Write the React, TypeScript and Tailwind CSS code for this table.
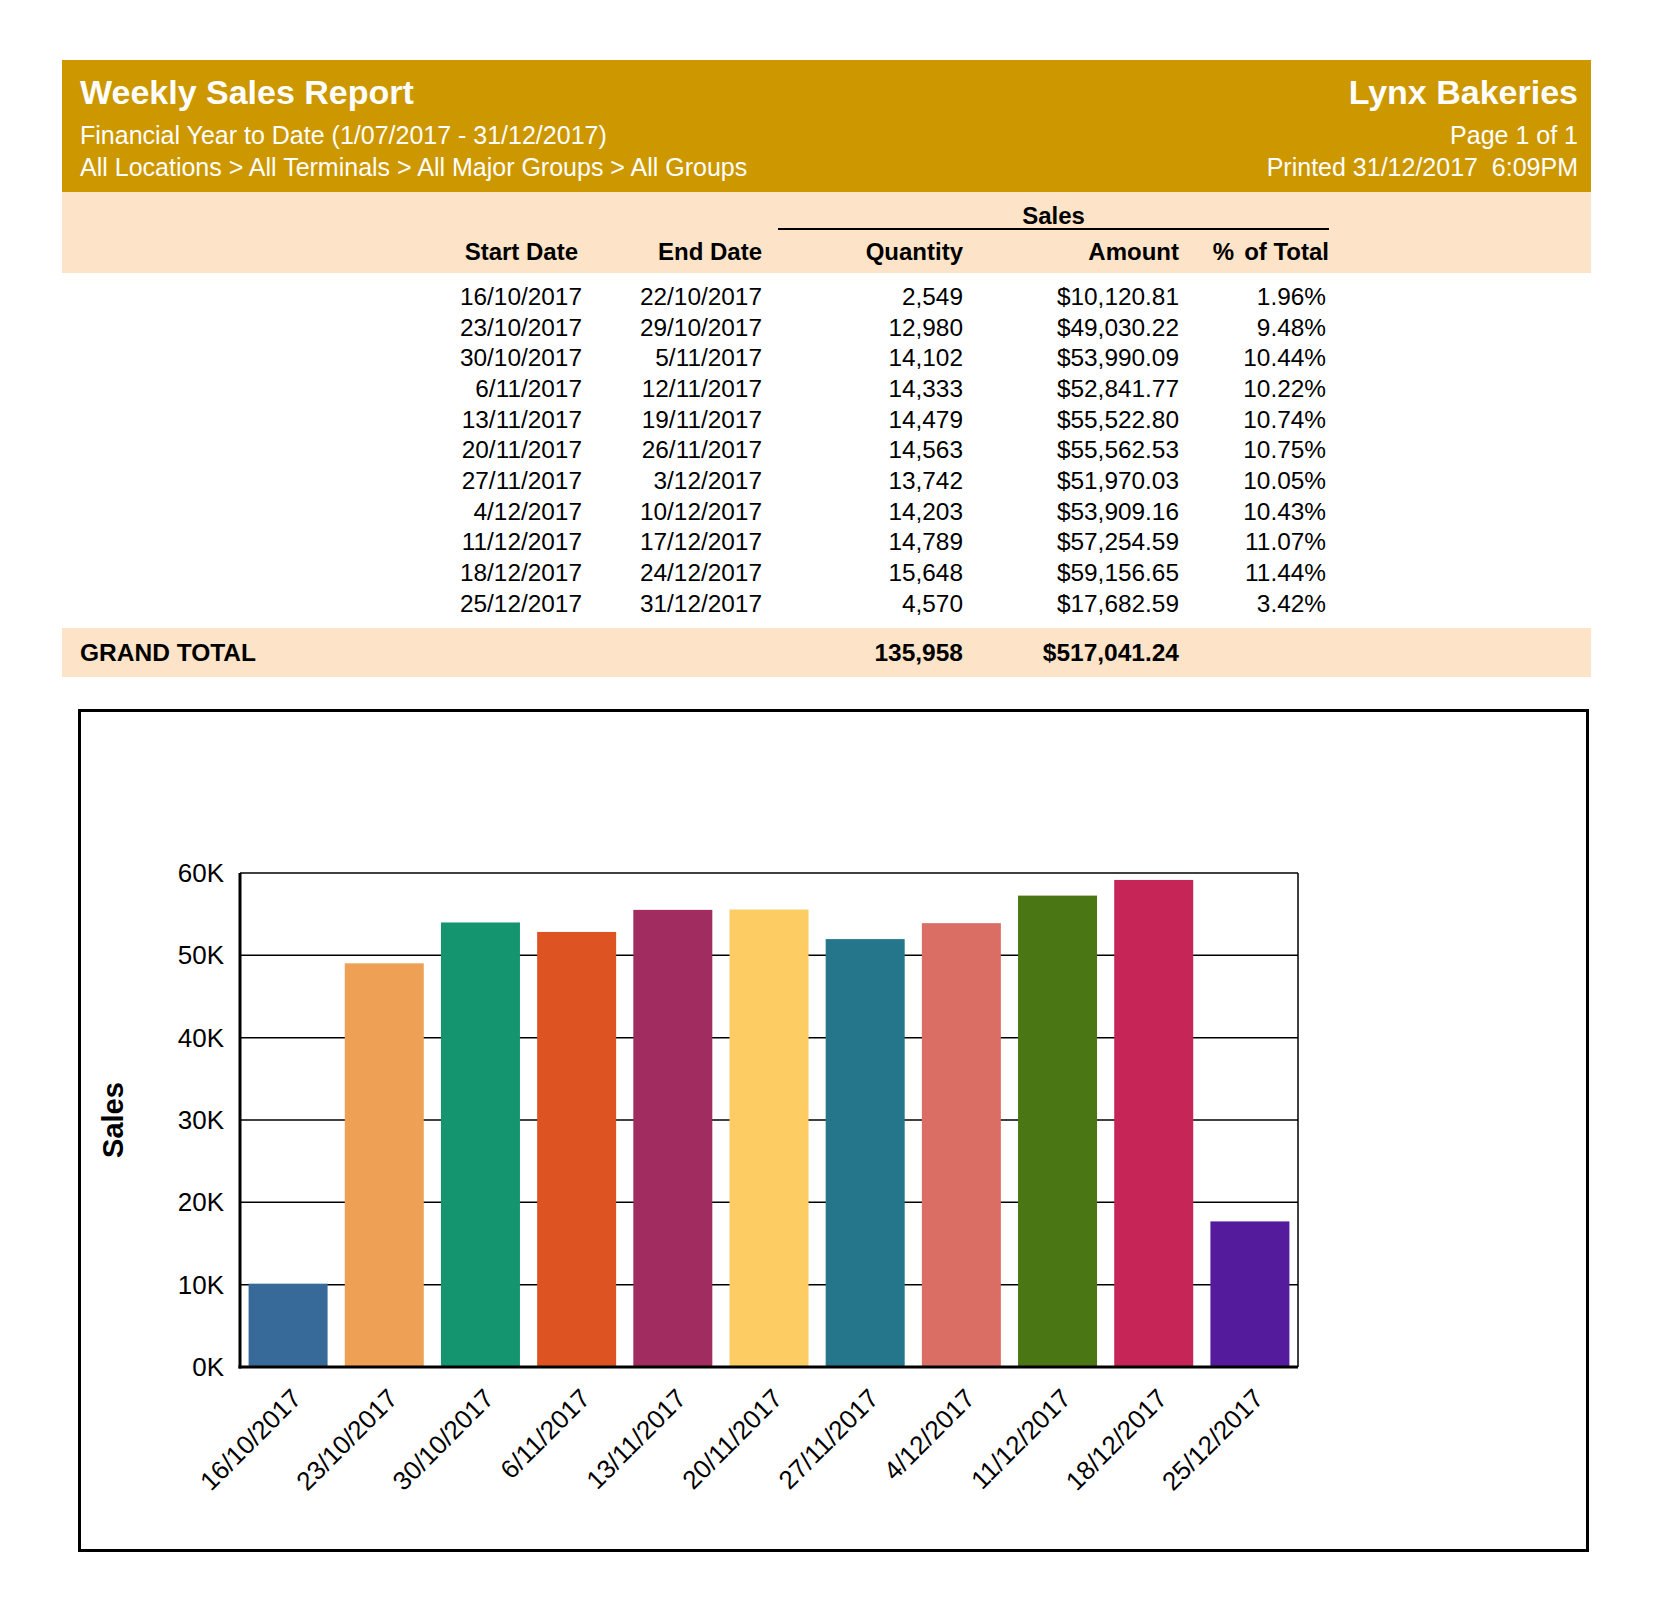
import React from 'react';

const rows = [
  { start: '16/10/2017', end: '22/10/2017', qty: '2,549', amount: '$10,120.81', pct: '1.96%', value: 10120.81, color: '#386a99' },
  { start: '23/10/2017', end: '29/10/2017', qty: '12,980', amount: '$49,030.22', pct: '9.48%', value: 49030.22, color: '#eea055' },
  { start: '30/10/2017', end: '5/11/2017', qty: '14,102', amount: '$53,990.09', pct: '10.44%', value: 53990.09, color: '#14956f' },
  { start: '6/11/2017', end: '12/11/2017', qty: '14,333', amount: '$52,841.77', pct: '10.22%', value: 52841.77, color: '#dd5422' },
  { start: '13/11/2017', end: '19/11/2017', qty: '14,479', amount: '$55,522.80', pct: '10.74%', value: 55522.8, color: '#a12c60' },
  { start: '20/11/2017', end: '26/11/2017', qty: '14,563', amount: '$55,562.53', pct: '10.75%', value: 55562.53, color: '#fdcc63' },
  { start: '27/11/2017', end: '3/12/2017', qty: '13,742', amount: '$51,970.03', pct: '10.05%', value: 51970.03, color: '#25768a' },
  { start: '4/12/2017', end: '10/12/2017', qty: '14,203', amount: '$53,909.16', pct: '10.43%', value: 53909.16, color: '#db6e64' },
  { start: '11/12/2017', end: '17/12/2017', qty: '14,789', amount: '$57,254.59', pct: '11.07%', value: 57254.59, color: '#4a7713' },
  { start: '18/12/2017', end: '24/12/2017', qty: '15,648', amount: '$59,156.65', pct: '11.44%', value: 59156.65, color: '#c62558' },
  { start: '25/12/2017', end: '31/12/2017', qty: '4,570', amount: '$17,682.59', pct: '3.42%', value: 17682.59, color: '#541b9c' },
];

// plot geometry, in page pixels
const plotLeft = 240;
const plotRight = 1298;
const plotTop = 873;
const plotBottom = 1367;
const pitch = (plotRight - plotLeft) / rows.length;
const barWidth = 79;
const yFor = (v: number) => plotBottom - (v / 60000) * (plotBottom - plotTop);

function SalesChart() {
  const ticks = [0, 10000, 20000, 30000, 40000, 50000, 60000];
  return (
    <svg width="1505" height="837" viewBox="81 712 1505 837" className="block">
      {ticks.map((t) => (
        <line key={t} x1={plotLeft} x2={plotRight} y1={yFor(t)} y2={yFor(t)} stroke="#000" strokeWidth="1.5" />
      ))}
      {rows.map((r, i) => {
        const cx = plotLeft + pitch * (i + 0.5);
        return <rect key={r.start} x={cx - barWidth / 2} y={yFor(r.value)} width={barWidth} height={plotBottom - yFor(r.value)} fill={r.color} />;
      })}
      <line x1={plotRight} x2={plotRight} y1={plotTop} y2={plotBottom} stroke="#000" strokeWidth="1.5" />
      <line x1={plotLeft} x2={plotLeft} y1={plotTop} y2={plotBottom + 1.5} stroke="#000" strokeWidth="3" />
      <line x1={plotLeft - 1.5} x2={plotRight} y1={plotBottom} y2={plotBottom} stroke="#000" strokeWidth="3" />
      {ticks.map((t) => (
        <text key={t} x={224} y={yFor(t) + 9} textAnchor="end" fontSize="26" fill="#000">
          {t / 1000}K
        </text>
      ))}
      <text x={122.5} y={1120} textAnchor="middle" fontSize="29" fontWeight="bold" fill="#000" transform="rotate(-90 122.5 1120)">
        Sales
      </text>
      {rows.map((r, i) => {
        const x = plotLeft + pitch * (i + 0.5) + 15;
        const y = 1400;
        return (
          <text key={r.start} x={x} y={y} textAnchor="end" fontSize="26" fill="#000" transform={`rotate(-45 ${x} ${y})`}>
            {r.start}
          </text>
        );
      })}
    </svg>
  );
}

export default function App() {
  return (
    <div className="w-[1653px] h-[1620px] bg-white pt-[60px] pl-[62px] font-['Liberation_Sans',Arial,sans-serif] text-black">
      <div className="w-[1529px]">
        <div className="h-[132px] bg-[#cd9700] text-white flex justify-between pl-[18px] pr-[13px] pt-[12px]">
          <div>
            <h1 className="text-[34px] leading-[40px] font-bold">Weekly Sales Report</h1>
            <p className="mt-[7px] text-[25px] leading-[32px]">Financial Year to Date (1/07/2017 - 31/12/2017)</p>
            <p className="text-[25px] leading-[32px]">All Locations &gt; All Terminals &gt; All Major Groups &gt; All Groups</p>
          </div>
          <div className="text-right">
            <div className="text-[34px] leading-[40px] font-bold">Lynx Bakeries</div>
            <p className="mt-[7px] text-[25px] leading-[32px]">Page 1 of 1</p>
            <p className="text-[25px] leading-[32px] whitespace-pre">Printed 31/12/2017  6:09PM</p>
          </div>
        </div>

        <div className="h-[81px] bg-[#fde4c8] pt-[12px] text-[24px] font-bold">
          <div className="grid grid-cols-[340px_180px_180px_201px_216px_150px]">
            <div className="col-start-4 col-span-3 ml-[16px] border-b-2 border-black text-center leading-[24px]">Sales</div>
          </div>
          <div className="mt-[8px] grid grid-cols-[340px_180px_180px_201px_216px_150px] leading-[28px] text-right">
            <div />
            <div className="pr-[4px]">Start Date</div>
            <div>End Date</div>
            <div>Quantity</div>
            <div>Amount</div>
            <div>
              %<span className="ml-[10px]">of Total</span>
            </div>
          </div>
        </div>

        <div className="pt-[9px] text-[24.4px] leading-[30.67px]">
          {rows.map((r) => (
            <div key={r.start} className="grid grid-cols-[340px_180px_180px_201px_216px_150px] text-right">
              <div />
              <div>{r.start}</div>
              <div>{r.end}</div>
              <div>{r.qty}</div>
              <div>{r.amount}</div>
              <div className="pr-[3px]">{r.pct}</div>
            </div>
          ))}
        </div>

        <div className="mt-[9px] h-[49px] bg-[#fde4c8] grid grid-cols-[340px_180px_180px_201px_216px_150px] items-center text-[24.5px] leading-[28px] font-bold">
          <div className="pl-[18px]">GRAND TOTAL</div>
          <div />
          <div />
          <div className="text-right">135,958</div>
          <div className="text-right">$517,041.24</div>
          <div />
        </div>

        <div className="mt-[32px] ml-[16px] w-[1511px] h-[843px] border-[3px] border-black">
          <SalesChart />
        </div>
      </div>
    </div>
  );
}
